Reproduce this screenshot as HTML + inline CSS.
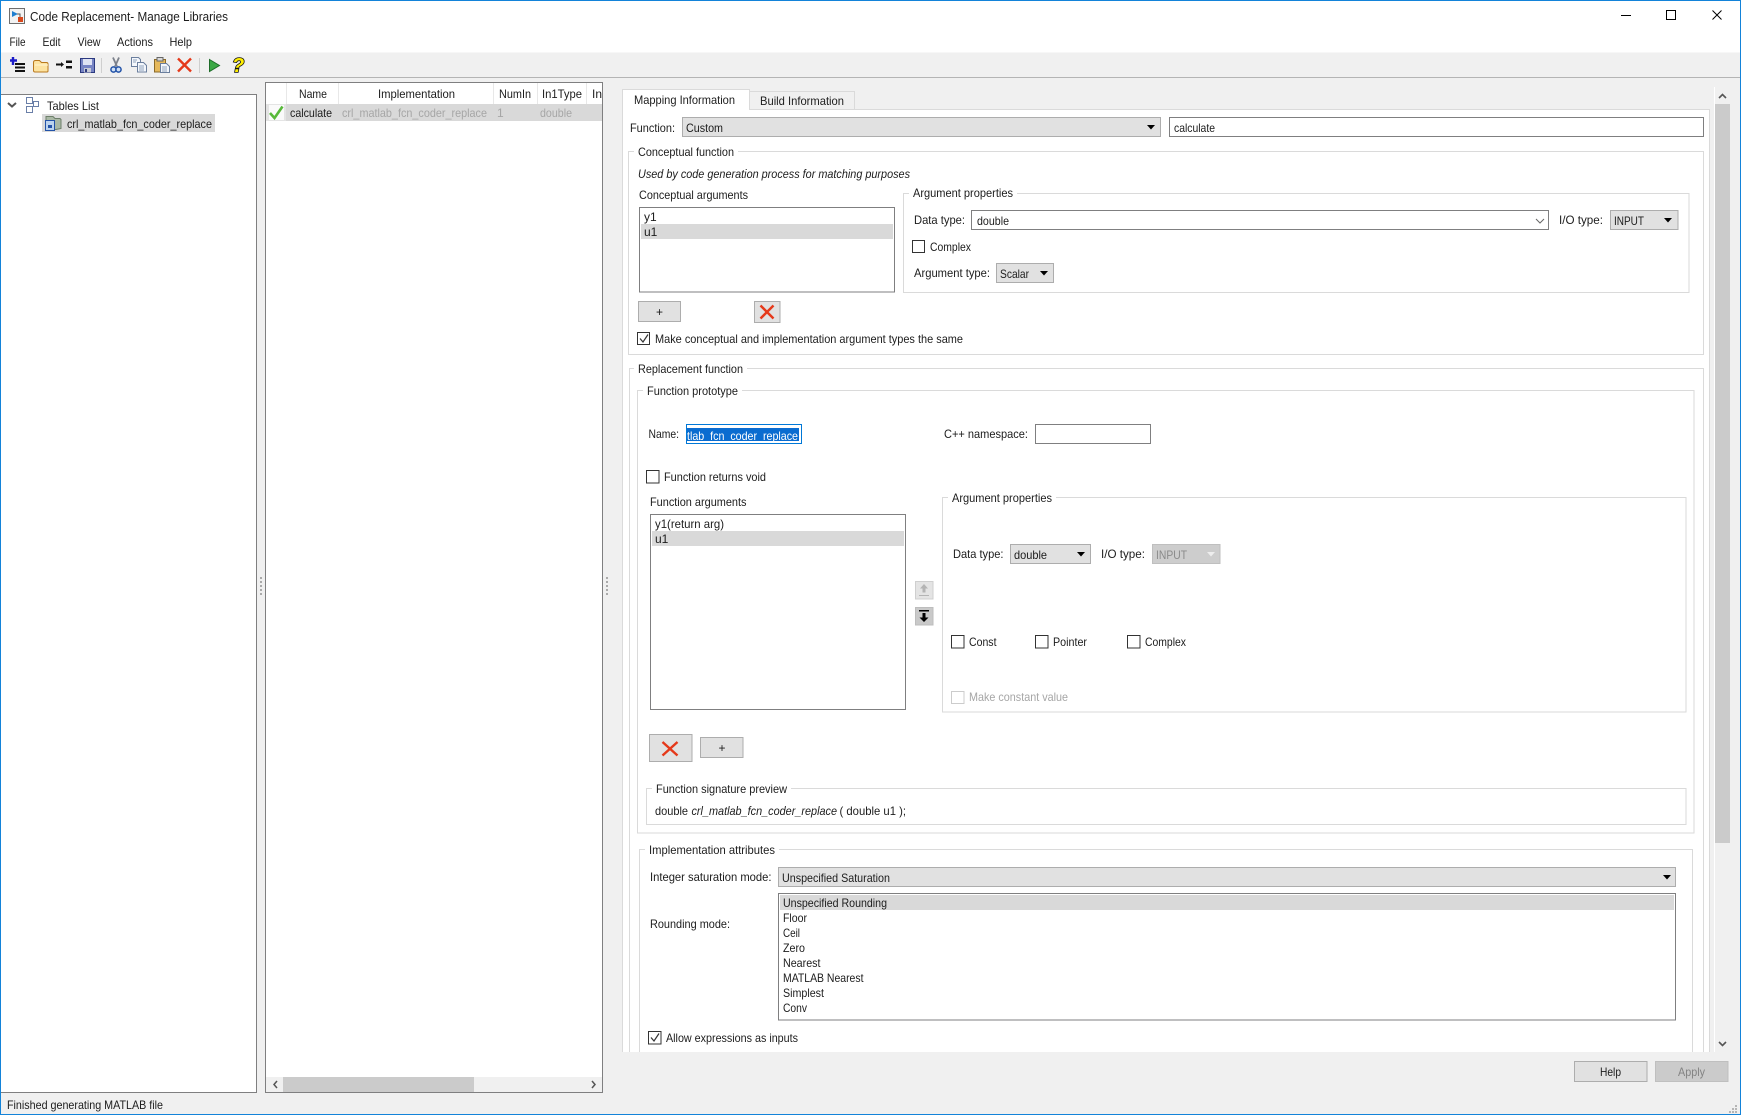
<!DOCTYPE html>
<html lang="en">
<head>
<meta charset="utf-8">
<title>Code Replacement- Manage Libraries</title>
<style>
html,body{margin:0;padding:0;background:#f0f0f0;width:1741px;height:1115px;overflow:hidden}
svg{display:block}
text{font:12px "Liberation Sans",sans-serif;fill:#1c1c1c}
.i{font-style:italic}
.d{fill:#a6a6a6}
.w{fill:#fff}
.g{fill:none;stroke:#dadada}
.f{fill:#fff;stroke:#7f7f80}
.c{fill:#e1e1e1;stroke:#adadad}
.k{fill:#fff;stroke:#333}
.r,.g,.f,.c,.k,.s{shape-rendering:crispEdges}
.a{fill:#000}
.x{fill:none;stroke:#e5391a;stroke-width:2.4}
</style>
</head>
<body>
<svg width="1741" height="1115" viewBox="0 0 1741 1115" xmlns="http://www.w3.org/2000/svg">
<rect class="r" width="1741" height="1115" fill="#f0f0f0"/>
<rect class="r" x="1" y="1" width="1739" height="51" fill="#fff"/>
<rect class="r" x="1" y="52" width="1739" height="1" fill="#f7f7f7"/>
<rect class="r" x="1" y="77" width="1739" height="1" fill="#b4b4b4"/>

<!-- title icon -->
<rect x="9.5" y="8.5" width="15" height="15" fill="#f2f2f2" stroke="#6e6e6e"/>
<path d="M12 11l6 3-6 3z" fill="#1f7fd0"/>
<rect x="18" y="17" width="5" height="5" fill="#d9481c"/>
<path d="M17 14h3v3" fill="none" stroke="#555"/>
<text x="30" y="21" textLength="198" lengthAdjust="spacingAndGlyphs" style="font-size:13px">Code Replacement- Manage Libraries</text>

<!-- window buttons -->
<rect class="r" x="1621" y="15" width="10" height="1" fill="#000"/>
<rect class="s" x="1666.5" y="10.5" width="9" height="9" fill="none" stroke="#000"/>
<path d="M1712.5 10.5l9 9M1721.5 10.5l-9 9" stroke="#000" fill="none"/>

<!-- menu -->
<text x="9.5" y="46" textLength="16" lengthAdjust="spacingAndGlyphs">File</text>
<text x="42.5" y="46" textLength="18" lengthAdjust="spacingAndGlyphs">Edit</text>
<text x="77.5" y="46" textLength="23" lengthAdjust="spacingAndGlyphs">View</text>
<text x="117" y="46" textLength="36" lengthAdjust="spacingAndGlyphs">Actions</text>
<text x="169.5" y="46" textLength="22.5" lengthAdjust="spacingAndGlyphs">Help</text>

<!-- toolbar icons -->
<path d="M13 57v8M10 60.500h7" stroke="#1c1cc8" stroke-width="2.400" fill="none"/>
<path d="M15 64h10M15 67.500h10M15 71h10" stroke="#111" stroke-width="2" fill="none"/>
<path d="M33.500 62.500q0-2 2-2h4l2 2h5q1.500 0 1.500 1.500v7q0 1-1 1h-12q-1.500 0-1.500-1.500z" fill="#fde3a0" stroke="#b9791e"/>
<path d="M35 65h13" stroke="#fff6d4"/>
<path d="M56 64.500h6" stroke="#111" stroke-width="2"/><path d="M61 62l3 2.500-3 2.500z" fill="#111"/>
<rect x="66" y="60.500" width="6" height="2.500" fill="#111"/><rect x="66" y="66" width="6" height="2.500" fill="#111"/>
<rect x="80.500" y="58.500" width="14" height="14" fill="#7784c4" stroke="#2c3a80"/>
<rect x="83" y="59" width="9" height="6" fill="#dfe3f3"/>
<rect x="84" y="68" width="7" height="4.500" fill="#c8cbd6"/><rect x="85" y="69" width="2" height="3" fill="#2c3a80"/>
<rect class="r" x="101" y="58" width="1" height="15" fill="#cfcfcf"/>
<path d="M113 57.500l4 9M119 57.500l-4 9" stroke="#7d828c" stroke-width="1.800" fill="none"/>
<circle cx="113.500" cy="69.500" r="2.600" fill="#cfe0f5" stroke="#2353a8" stroke-width="1.500"/>
<circle cx="118.500" cy="69.500" r="2.600" fill="#cfe0f5" stroke="#2353a8" stroke-width="1.500"/>
<path d="M131.500 57.500h7l2 2v7h-9z" fill="#f4f7fc" stroke="#6b7f9e"/>
<path d="M137.500 62.500h6l3 3v6.500h-9z" fill="#f4f7fc" stroke="#6b7f9e"/>
<path d="M139 66h5M139 68h5M139 70h5M133 60h4M133 62h3" stroke="#8fa3bd"/>
<rect x="154.500" y="59.500" width="11" height="12.500" fill="#e6b95c" stroke="#8a6a2a"/>
<rect x="157" y="57.500" width="6" height="3.500" fill="#d8d8d8" stroke="#666"/>
<path d="M160.500 63.500h6l3 3v6h-9z" fill="#f4f7fc" stroke="#6b7f9e"/>
<path d="M162 67h5M162 69h5M162 71h5" stroke="#8fa3bd"/>
<path class="x" d="M178 58.500l13 13M191 58.500l-13 13"/>
<rect class="r" x="199" y="58" width="1" height="15" fill="#cfcfcf"/>
<path d="M209.500 59.500l10 6-10 6z" fill="#3aa845" stroke="#1d6b28"/>
<text x="232" y="72" style="font:italic bold 20px 'Liberation Sans',sans-serif;fill:#ffee00;stroke:#111;stroke-width:1.600;paint-order:stroke">?</text>

<!-- left panel -->
<rect class="f" x="0.500" y="94.500" width="256" height="998" stroke="#85868c"/>
<path d="M8 103l4 3.500 4-3.500" fill="none" stroke="#555" stroke-width="2"/>
<rect x="26.500" y="97.500" width="6" height="6" fill="#fff" stroke="#6a7fa8"/>
<rect x="33.500" y="101.500" width="5" height="5" fill="#fff" stroke="#6a7fa8"/>
<rect x="26.500" y="106.500" width="6" height="6" fill="#fff" stroke="#6a7fa8"/>
<text x="47" y="110" textLength="52" lengthAdjust="spacingAndGlyphs">Tables List</text>
<rect class="r" x="42" y="114" width="173" height="18" fill="#d9d9d9"/>
<path d="M46 116.500h7l2 2h5l1 1v9l-5 1h-10z" fill="#a9b8a5" stroke="#6d7f6a"/>
<rect x="45.500" y="120.500" width="9" height="10" fill="#bcd3ee" stroke="#2353a8"/>
<rect x="48" y="125" width="4" height="3" fill="#2353a8"/>
<text x="67" y="128" textLength="145" lengthAdjust="spacingAndGlyphs">crl_matlab_fcn_coder_replace</text>

<!-- splitters -->
<g class="r" fill="#aaa">
<rect x="260" y="577" width="2" height="2"/><rect x="260" y="581" width="2" height="2"/><rect x="260" y="585" width="2" height="2"/><rect x="260" y="589" width="2" height="2"/><rect x="260" y="593" width="2" height="2"/>
<rect x="606" y="577" width="2" height="2"/><rect x="606" y="581" width="2" height="2"/><rect x="606" y="585" width="2" height="2"/><rect x="606" y="589" width="2" height="2"/><rect x="606" y="593" width="2" height="2"/>
</g>

<!-- table panel -->
<rect class="f" x="265.500" y="82.500" width="337" height="1010" stroke="#85868c"/>
<g class="r" fill="#e8e8e8">
<rect x="286" y="83" width="1" height="21"/><rect x="338" y="83" width="1" height="21"/><rect x="493" y="83" width="1" height="21"/><rect x="537" y="83" width="1" height="21"/><rect x="586" y="83" width="1" height="21"/>
</g>
<text x="299" y="98" textLength="28" lengthAdjust="spacingAndGlyphs">Name</text>
<text x="378" y="98" textLength="77" lengthAdjust="spacingAndGlyphs">Implementation</text>
<text x="499" y="98" textLength="32" lengthAdjust="spacingAndGlyphs">NumIn</text>
<text x="542" y="98" textLength="40" lengthAdjust="spacingAndGlyphs">In1Type</text>
<text x="592" y="98" textLength="10" lengthAdjust="spacingAndGlyphs">In</text>
<rect class="r" x="286" y="104" width="316" height="17" fill="#d9d9d9"/>
<rect class="r" x="266" y="104" width="20" height="17" fill="#e4e4e4"/>
<rect class="r" x="269" y="105" width="15" height="15" fill="#fafafa"/>
<path d="M270 113l4.500 5 8-11.500" fill="none" stroke="#58b93a" stroke-width="2.600"/>
<text x="290" y="117" textLength="42" lengthAdjust="spacingAndGlyphs">calculate</text>
<text class="d" x="342" y="117" textLength="145" lengthAdjust="spacingAndGlyphs">crl_matlab_fcn_coder_replace</text>
<text class="d" x="497" y="117">1</text>
<text class="d" x="540" y="117" textLength="32" lengthAdjust="spacingAndGlyphs">double</text>
<rect class="r" x="266" y="1077" width="336" height="15" fill="#f0f0f0"/>
<rect class="r" x="283" y="1077" width="191" height="15" fill="#cbcbcb"/>
<path d="M277 1081l-3 3.500 3 3.500M592 1081l3 3.500-3 3.500" fill="none" stroke="#555" stroke-width="1.500"/>

<!-- status -->
<text x="7" y="1109" textLength="156" lengthAdjust="spacingAndGlyphs">Finished generating MATLAB file</text>

<!-- tabs and content -->
<rect class="r" x="622" y="109" width="1088" height="943" fill="#fff"/>
<path class="s" d="M622.500 1052V109.500H623M749 109.500H1709.500V1052" fill="none" stroke="#dadada"/>
<rect class="s" x="749.500" y="91.500" width="105" height="18" fill="#f0f0f0" stroke="#dadada"/>
<path class="s" d="M622.500 109.500V89.500H749.500V109.500" fill="#fff" stroke="#dadada"/>
<rect class="r" x="623" y="108" width="126" height="3" fill="#fff"/>
<text x="634" y="104" textLength="101" lengthAdjust="spacingAndGlyphs">Mapping Information</text>
<text x="760" y="105" textLength="84" lengthAdjust="spacingAndGlyphs">Build Information</text>

<text x="630" y="132" textLength="45" lengthAdjust="spacingAndGlyphs">Function:</text>
<rect class="c" x="682.500" y="117.500" width="478" height="19"/>
<text x="686" y="132" textLength="37" lengthAdjust="spacingAndGlyphs">Custom</text>
<path class="a" d="M1147 125h8l-4 4.500z"/>
<rect class="f" x="1169.500" y="117.500" width="534" height="19"/>
<text x="1174" y="132" textLength="41" lengthAdjust="spacingAndGlyphs">calculate</text>

<!-- conceptual function -->
<rect class="g" x="628.500" y="151.500" width="1075" height="203"/>
<rect class="r" x="634" y="148" width="104" height="8" fill="#fff"/>
<text x="638" y="156" textLength="96" lengthAdjust="spacingAndGlyphs">Conceptual function</text>
<text class="i" x="638" y="178" textLength="272" lengthAdjust="spacingAndGlyphs">Used by code generation process for matching purposes</text>
<text x="639" y="199" textLength="109" lengthAdjust="spacingAndGlyphs">Conceptual arguments</text>
<rect class="f" x="639.500" y="207.500" width="255" height="84.500"/>
<text x="644" y="221">y1</text>
<rect class="r" x="641" y="224" width="252" height="15" fill="#d9d9d9"/>
<text x="644" y="236">u1</text>

<rect class="g" x="903.500" y="193.500" width="785.500" height="99"/>
<rect class="r" x="909" y="190" width="108" height="8" fill="#fff"/>
<text x="913" y="197" textLength="100" lengthAdjust="spacingAndGlyphs">Argument properties</text>
<text x="914" y="224" textLength="51" lengthAdjust="spacingAndGlyphs">Data type:</text>
<rect class="f" x="971.500" y="210.500" width="577" height="19"/>
<text x="977" y="225" textLength="32" lengthAdjust="spacingAndGlyphs">double</text>
<path d="M1536 219l4 4 4-4" fill="none" stroke="#666"/>
<text x="1559" y="224" textLength="44" lengthAdjust="spacingAndGlyphs">I/O type:</text>
<rect class="c" x="1610.500" y="210.500" width="67.500" height="19"/>
<text x="1614" y="225" textLength="30" lengthAdjust="spacingAndGlyphs">INPUT</text>
<path class="a" d="M1664 218h8l-4 4.500z"/>
<rect class="k" x="912.500" y="240.500" width="12" height="12"/>
<text x="930" y="251" textLength="41" lengthAdjust="spacingAndGlyphs">Complex</text>
<text x="914" y="277" textLength="76" lengthAdjust="spacingAndGlyphs">Argument type:</text>
<rect class="c" x="996.500" y="263.500" width="57" height="19"/>
<text x="1000" y="278" textLength="29" lengthAdjust="spacingAndGlyphs">Scalar</text>
<path class="a" d="M1040 271h8l-4 4.500z"/>

<rect class="c" x="638.500" y="301.500" width="42" height="20"/>
<text x="656" y="316">+</text>
<rect class="c" x="754.500" y="301.500" width="25.500" height="21"/>
<path class="x" d="M760.500 305.500l13 13M773.500 305.500l-13 13"/>
<rect class="k" x="637.500" y="332.500" width="12" height="12"/>
<path d="M640 338.500l3 3.500 5-7.500" fill="none" stroke="#333" stroke-width="1.200"/>
<text x="655" y="343" textLength="308" lengthAdjust="spacingAndGlyphs">Make conceptual and implementation argument types the same</text>

<!-- replacement function -->
<path class="g" d="M629.500 1052V368.500H1703.500V1052"/>
<rect class="r" x="634" y="365" width="113" height="8" fill="#fff"/>
<text x="638" y="373" textLength="105" lengthAdjust="spacingAndGlyphs">Replacement function</text>
<rect class="g" x="637.500" y="390.500" width="1056.500" height="442.500"/>
<rect class="r" x="643" y="387" width="99" height="8" fill="#fff"/>
<text x="647" y="395" textLength="91" lengthAdjust="spacingAndGlyphs">Function prototype</text>
<text x="648.500" y="438" textLength="30.500" lengthAdjust="spacingAndGlyphs">Name:</text>
<rect class="s" x="686.500" y="424.500" width="115" height="19" fill="#fff" stroke="#0078d7"/>
<rect class="r" x="687" y="428" width="112" height="13" fill="#0a6cd0"/>
<text class="w" x="687" y="440" textLength="111" lengthAdjust="spacingAndGlyphs">tlab_fcn_coder_replace</text>
<text x="944" y="438" textLength="84" lengthAdjust="spacingAndGlyphs">C++ namespace:</text>
<rect class="f" x="1035.500" y="424.500" width="115" height="19"/>
<rect class="k" x="646.500" y="470.500" width="12.500" height="12.500"/>
<text x="664" y="481" textLength="102" lengthAdjust="spacingAndGlyphs">Function returns void</text>
<text x="650" y="506" textLength="96.500" lengthAdjust="spacingAndGlyphs">Function arguments</text>
<rect class="f" x="650.500" y="514.500" width="255" height="195"/>
<text x="655" y="528" textLength="69" lengthAdjust="spacingAndGlyphs">y1(return arg)</text>
<rect class="r" x="652" y="531" width="252" height="15" fill="#d9d9d9"/>
<text x="655" y="543">u1</text>

<rect class="g" x="942.500" y="497.500" width="743.500" height="214.500"/>
<rect class="r" x="948" y="494" width="108" height="8" fill="#fff"/>
<text x="952" y="502" textLength="100" lengthAdjust="spacingAndGlyphs">Argument properties</text>
<text x="953" y="558" textLength="50.500" lengthAdjust="spacingAndGlyphs">Data type:</text>
<rect class="c" x="1010.500" y="544.500" width="80" height="19"/>
<text x="1014" y="559" textLength="33" lengthAdjust="spacingAndGlyphs">double</text>
<path class="a" d="M1077 552h8l-4 4.500z"/>
<text x="1101" y="558" textLength="44" lengthAdjust="spacingAndGlyphs">I/O type:</text>
<rect class="s" x="1152.500" y="544.500" width="67.500" height="19" fill="#cdcdcd" stroke="#bfbfbf"/>
<text x="1156" y="559" textLength="31" lengthAdjust="spacingAndGlyphs" style="fill:#8a8a8a">INPUT</text>
<path d="M1207 552h8l-4 4.500z" fill="#eee"/>

<rect class="s" x="915.500" y="581.500" width="17.500" height="17.500" fill="#e4e4e4" stroke="#cfcfcf"/>
<path d="M924 584l4 4.500h-2.500v4h-3v-4H920z" fill="#b4b4b4"/><rect class="r" x="919" y="595" width="10" height="1" fill="#b4b4b4"/>
<rect class="s" x="915.500" y="607.500" width="17.500" height="17.500" fill="#c9c9c9" stroke="#bdbdbd"/>
<rect class="r" x="919" y="610" width="10" height="1.500" fill="#000"/>
<path d="M924 622l-4.500-4.500h3v-4.500h3v4.500h3z" fill="#000"/>

<rect class="k" x="951.500" y="635.500" width="12.500" height="12.500"/>
<text x="969" y="646" textLength="27.500" lengthAdjust="spacingAndGlyphs">Const</text>
<rect class="k" x="1035.500" y="635.500" width="12.500" height="12.500"/>
<text x="1053" y="646" textLength="34" lengthAdjust="spacingAndGlyphs">Pointer</text>
<rect class="k" x="1127.500" y="635.500" width="12.500" height="12.500"/>
<text x="1145" y="646" textLength="41" lengthAdjust="spacingAndGlyphs">Complex</text>
<rect class="s" x="951.500" y="691.500" width="12.500" height="12" fill="#fff" stroke="#cccccc"/>
<text class="d" x="969" y="701" textLength="99" lengthAdjust="spacingAndGlyphs">Make constant value</text>

<rect class="c" x="649.500" y="734.500" width="42.500" height="27"/>
<path class="x" d="M662.500 742l15 13.500M677.500 742l-15 13.500"/>
<rect class="c" x="700.500" y="737.500" width="42.500" height="20"/>
<text x="718.500" y="752">+</text>

<rect class="g" x="646.500" y="788.500" width="1039.500" height="36"/>
<rect class="r" x="652" y="785" width="139" height="8" fill="#fff"/>
<text x="656" y="793" textLength="131" lengthAdjust="spacingAndGlyphs">Function signature preview</text>
<text x="655" y="815" textLength="33" lengthAdjust="spacingAndGlyphs">double</text>
<text class="i" x="691.500" y="815" textLength="145.500" lengthAdjust="spacingAndGlyphs">crl_matlab_fcn_coder_replace</text>
<text x="839.500" y="815" textLength="66.500" lengthAdjust="spacingAndGlyphs">( double u1 );</text>

<!-- implementation attributes -->
<path class="g" d="M639.500 1052V849.500H1692.500V1052"/>
<rect class="r" x="645" y="846" width="134" height="8" fill="#fff"/>
<text x="649" y="854" textLength="126" lengthAdjust="spacingAndGlyphs">Implementation attributes</text>
<text x="650" y="881" textLength="121.500" lengthAdjust="spacingAndGlyphs">Integer saturation mode:</text>
<rect class="c" x="778.500" y="867.500" width="897" height="19"/>
<text x="782" y="882" textLength="108" lengthAdjust="spacingAndGlyphs">Unspecified Saturation</text>
<path class="a" d="M1663 875h8l-4 4.500z"/>
<text x="650" y="928" textLength="80" lengthAdjust="spacingAndGlyphs">Rounding mode:</text>
<rect class="f" x="778.500" y="893.500" width="897" height="126.500"/>
<rect class="r" x="780" y="895" width="894" height="15" fill="#d9d9d9"/>
<text x="783" y="907" textLength="104" lengthAdjust="spacingAndGlyphs">Unspecified Rounding</text>
<text x="783" y="922" textLength="24" lengthAdjust="spacingAndGlyphs">Floor</text>
<text x="783" y="937" textLength="17" lengthAdjust="spacingAndGlyphs">Ceil</text>
<text x="783" y="952" textLength="22" lengthAdjust="spacingAndGlyphs">Zero</text>
<text x="783" y="967" textLength="37.500" lengthAdjust="spacingAndGlyphs">Nearest</text>
<text x="783" y="982" textLength="80.500" lengthAdjust="spacingAndGlyphs">MATLAB Nearest</text>
<text x="783" y="997" textLength="41" lengthAdjust="spacingAndGlyphs">Simplest</text>
<text x="783" y="1012" textLength="24" lengthAdjust="spacingAndGlyphs">Conv</text>
<rect class="k" x="648.500" y="1031.500" width="12.500" height="12.500"/>
<path d="M651 1037.500l3 3.500 5-7.500" fill="none" stroke="#333" stroke-width="1.200"/>
<text x="666" y="1042" textLength="132" lengthAdjust="spacingAndGlyphs">Allow expressions as inputs</text>

<!-- right scrollbar -->
<rect class="r" x="1714" y="87" width="1" height="965" fill="#fff"/>
<rect class="r" x="1715" y="104" width="15" height="739" fill="#cbcbcb"/>
<path d="M1719 98l3.500-3.500 3.500 3.500M1719 1042l3.500 3.500 3.500-3.500" fill="none" stroke="#555" stroke-width="1.600"/>

<!-- bottom buttons -->
<rect class="c" x="1574.500" y="1061.500" width="72.500" height="20"/>
<text x="1600" y="1076" textLength="21" lengthAdjust="spacingAndGlyphs">Help</text>
<rect class="s" x="1655.500" y="1061.500" width="72.500" height="20" fill="#cbcbcb" stroke="#bfbfbf"/>
<text x="1678" y="1076" textLength="27" lengthAdjust="spacingAndGlyphs" style="fill:#838383">Apply</text>
<g class="r" fill="#b5b5b5">
<rect x="1735" y="1105" width="2" height="2"/><rect x="1732" y="1108" width="2" height="2"/><rect x="1735" y="1108" width="2" height="2"/><rect x="1729" y="1111" width="2" height="2"/><rect x="1732" y="1111" width="2" height="2"/><rect x="1735" y="1111" width="2" height="2"/>
</g>

<!-- window frame -->
<rect class="s" x="0.500" y="0.500" width="1740" height="1114" fill="none" stroke="#1383d9"/>
</svg>
</body>
</html>
